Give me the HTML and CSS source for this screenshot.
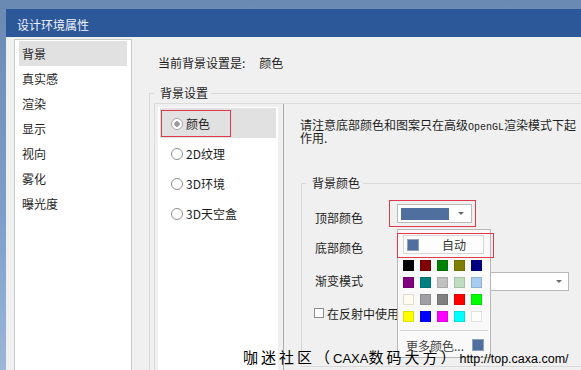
FILE: index.html
```html
<!DOCTYPE html>
<html lang="zh-CN">
<head>
  <meta charset="UTF-8" />
  <title>设计环境属性</title>
  <link rel="stylesheet" href="styles.css">
</head>
<body>
  <div class="desk">
    <div class="window">
      <div class="titlebar">设计环境属性</div>
      <div class="content">
        <!-- Left category list -->
        <ul class="nav">
          <li class="active">背景</li>
          <li>真实感</li>
          <li>渲染</li>
          <li>显示</li>
          <li>视向</li>
          <li>雾化</li>
          <li>曝光度</li>
        </ul>

        <div class="main">
          <div class="current">当前背景设置是:<span class="current-value">颜色</span></div>

          <fieldset class="group outer">
            <legend>背景设置</legend>
            <div class="split">
              <ul class="modes">
                <li class="active"><span class="opt marked"><i class="radio checked"></i>颜色</span></li>
                <li><span class="opt"><i class="radio"></i>2D纹理</span></li>
                <li><span class="opt"><i class="radio"></i>3D环境</span></li>
                <li><span class="opt"><i class="radio"></i>3D天空盒</span></li>
              </ul>

              <div class="pane">
                <p class="note">请注意底部颜色和图案只在高级<span class="mono">OpenGL</span>渲染模式下起作用.</p>

                <fieldset class="group colors">
                  <legend>背景颜色</legend>
                  <div class="row first">
                    <span class="lbl lbl-top">顶部颜色</span>
                    <span class="pick">
                      <span class="combo"><span class="swatch-wide"></span><i class="arrow"></i></span>
                    </span>
                  </div>
                  <div class="row">
                    <span class="lbl">底部颜色</span>
                  </div>
                  <div class="row">
                    <span class="lbl">渐变模式</span>
                    <span class="combo long"><i class="arrow"></i></span>
                  </div>
                  <div class="row">
                    <span class="check"></span>
                    <span>在反射中使用背景</span>
                  </div>
                </fieldset>
              </div>
            </div>
          </fieldset>
        </div>
      </div>
    </div>

    <!-- Colour dropdown popup -->
    <div class="popup">
      <div class="auto">
        <div class="auto-btn"><span class="swatch"></span><span class="auto-text">自动</span></div>
      </div>
      <div class="grid">
        <span class="cell" style="background:#000000"></span>
        <span class="cell" style="background:#800000"></span>
        <span class="cell" style="background:#008000"></span>
        <span class="cell" style="background:#808000"></span>
        <span class="cell" style="background:#000080"></span>
        <span class="cell" style="background:#800080"></span>
        <span class="cell" style="background:#008080"></span>
        <span class="cell" style="background:#c0c0c0"></span>
        <span class="cell" style="background:#c0dcc0"></span>
        <span class="cell" style="background:#a6caf0"></span>
        <span class="cell" style="background:#fffbf0"></span>
        <span class="cell" style="background:#a0a0a4"></span>
        <span class="cell" style="background:#808080"></span>
        <span class="cell" style="background:#ff0000"></span>
        <span class="cell" style="background:#00ff00"></span>
        <span class="cell" style="background:#ffff00"></span>
        <span class="cell" style="background:#0000ff"></span>
        <span class="cell" style="background:#ff00ff"></span>
        <span class="cell" style="background:#00ffff"></span>
        <span class="cell" style="background:#ffffff"></span>
      </div>
      <div class="sep"></div>
      <div class="more"><span>更多颜色...</span><span class="swatch more-swatch"></span></div>
    </div>

    <div class="watermark"><span class="wm-cn">咖迷社区（</span><span class="wm-en">CAXA</span><span class="wm-cn">数码大方）</span><span class="wm-url">http://top.caxa.com/</span></div>
  </div>
</body>
</html>
```

FILE: styles.css
```css
/* Global */
* {
  box-sizing: border-box;
}
html, body {
  margin: 0;
  height: 100%;
  overflow: hidden;
}
body {
  font-family: "Noto Sans CJK SC", "Noto Sans", sans-serif;
  font-size: 12px;
  color: #1e1e1e;
  background: linear-gradient(180deg, #6a89b3 0%, #7f9fca 60%, #9cb6d8 100%);
}
.desk {
  position: relative;
  height: 100%;
  padding: 9px 0 0 6px;
}
.window {
  width: 640px;
  height: calc(100% + 30px);
  background: #f0f0f0;
  display: flex;
  flex-direction: column;
}
.titlebar {
  flex: none;
  height: 28px;
  padding: 3px 0 0 11px;
  line-height: 25px;
  background: #2c5899;
  color: #eef3fa;
}
.content {
  flex: 1;
  min-height: 0;
  display: flex;
  padding: 2px 0 0 8px;
}

/* Category list */
.nav {
  flex: none;
  width: 118px;
  margin: 0;
  padding: 1px 4px;
  list-style: none;
  background: #fff;
  border: 1px solid #cacaca;
}
.nav li {
  height: 25px;
  line-height: 25px;
  padding-left: 3px;
}
.nav li.active {
  background: #e1e1e1;
}

/* Main area */
.main {
  flex: 1;
  min-width: 0;
  padding: 16px 0 0 17px;
}
.current {
  margin-left: 9px;
  line-height: 16px;
}
.current-value {
  margin-left: 14px;
}
.group {
  min-width: 0;
  margin: 0;
  border: 1px solid #d9d9d9;
}
.group legend {
  padding: 0 3px;
  line-height: 16px;
  font-size: 12px;
}
.outer {
  margin-top: 14px;
  padding: 2px 4px 0;
  height: 320px;
}
.outer legend {
  padding-left: 6px;
}
.split {
  display: flex;
  height: 100%;
  border: 1px solid #dcdcdc;
}

/* Background mode list */
.modes {
  flex: none;
  width: 120px;
  margin: 3px 5px 3px 3px;
  padding: 1px 2px;
  list-style: none;
  background: #fff;
}
.modes li {
  height: 30px;
  padding: 2px 0 0 1px;
}
.modes li.active {
  background: #e1e1e1;
}
.opt {
  display: inline-flex;
  align-items: center;
  gap: 3px;
  height: 27px;
  padding-left: 9px;
  border: 1px solid transparent;
  white-space: nowrap;
}
.opt.marked {
  width: 70px;
  border-color: #e03a4a;
}
.radio {
  flex: none;
  width: 12px;
  height: 12px;
  border-radius: 50%;
  border: 1px solid #8e8e8e;
  background: #fff;
}
.radio.checked {
  border-color: #a8a8a8;
  background: radial-gradient(circle, #9c9c9c 0 2.5px, #fff 3px);
}

/* Right pane */
.pane {
  flex: 1;
  border-left: 1px solid #ababab;
  padding: 14px 0 0 16px;
}
.note {
  width: 280px;
  margin: 0;
  line-height: 13px;
}
.mono {
  font-family: "Liberation Mono", monospace;
  font-size: 10px;
  line-height: 0;
}
.colors {
  margin: 31px 0 0 1px;
  padding: 9px 4px 0;
  height: 192px;
}
.row {
  display: flex;
  align-items: center;
  height: 26px;
  margin-top: 7px;
  padding-left: 9px;
}
.row.first {
  height: 27px;
  margin-top: 0;
}
.lbl {
  width: 74px;
}
.lbl-top {
  margin-top: 8px;
}
.pick {
  display: flex;
  align-items: center;
  width: 87px;
  height: 27px;
  padding-left: 7px;
  border: 1px solid #e03a4a;
}
.combo {
  display: flex;
  align-items: center;
  width: 75px;
  height: 19px;
  padding: 0 3px;
  border: 1px solid #bababa;
  background: #fff;
}
.combo.long {
  width: 172px;
  margin: 3px 0 0 8px;
  justify-content: flex-end;
  padding-right: 6px;
}
.swatch-wide {
  width: 48px;
  height: 12px;
  background: #4f6f9f;
}
.arrow {
  margin-left: 9px;
  border-left: 3px solid transparent;
  border-right: 3px solid transparent;
  border-top: 3px solid #6a6a6a;
}
.check {
  width: 10px;
  height: 10px;
  margin-left: -1px;
  margin-right: 3px;
  border: 1px solid #8e8e8e;
  background: #fff;
}

/* Colour popup */
.popup {
  position: absolute;
  left: 397px;
  top: 229px;
  width: 94px;
  height: 129px;
  border: 1px solid #b7b7b7;
  background: #f9f9f9;
}
.auto {
  width: 97px;
  height: 25px;
  margin: 3px 0 0 -1px;
  padding: 1px 0 0 5px;
  border: 1px solid #e03a4a;
}
.auto-btn {
  display: flex;
  align-items: center;
  width: 81px;
  height: 19px;
  padding-left: 3px;
  border: 1px solid #d6d6d6;
  background: #fdfdfd;
  color: #333;
}
.swatch {
  width: 12px;
  height: 12px;
  background: #4f6f9f;
  border: 1px solid #8ea2c0;
}
.auto-text {
  margin-left: 23px;
}
.grid {
  display: grid;
  grid-template-columns: repeat(5, 11px);
  gap: 6px;
  margin-top: 2px;
  padding-left: 5px;
}
.cell {
  width: 11px;
  height: 11px;
  border: 1px solid rgba(0, 0, 0, 0.12);
}
.sep {
  height: 1px;
  margin: 8px 2px 0;
  background: #d4d4d4;
}
.more {
  display: flex;
  align-items: center;
  height: 14px;
  margin-top: 7px;
  padding: 0 6px 0 8px;
  color: #444;
}
.more-swatch {
  margin-left: auto;
}

/* Watermark */
.watermark {
  position: absolute;
  left: 243px;
  top: 347px;
  line-height: 20px;
  color: #000;
  white-space: nowrap;
}
.wm-cn {
  font-size: 15px;
  letter-spacing: 3px;
}
.wm-en {
  font-family: "Liberation Sans", sans-serif;
  font-size: 13px;
}
.wm-url {
  margin-left: 1px;
  font-family: "Liberation Sans", sans-serif;
  font-size: 12.5px;
}
```
